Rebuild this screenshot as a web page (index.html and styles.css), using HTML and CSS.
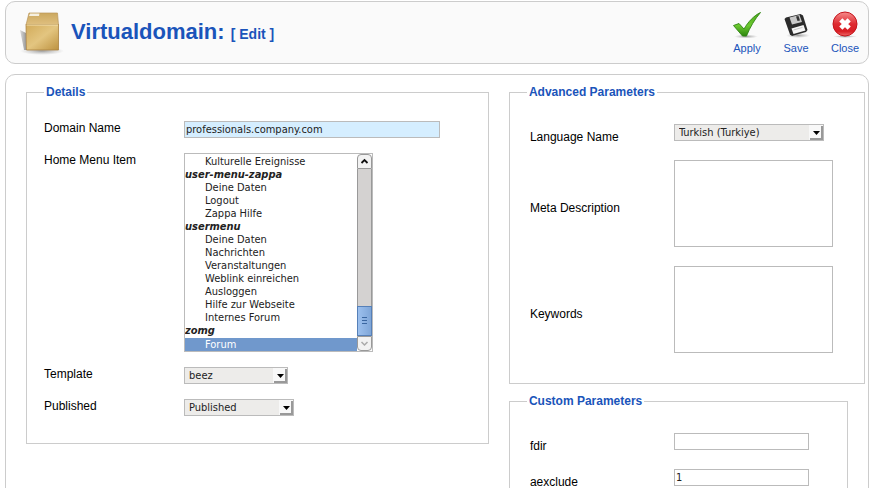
FILE: index.html
```html
<!DOCTYPE html>
<html lang="en">
<head>
<meta charset="utf-8">
<title>Virtualdomain: [ Edit ]</title>
<link rel="stylesheet" href="styles.css">
</head>
<body>
<header class="toolbar">
  <svg class="package" viewBox="0 0 48 48" aria-hidden="true">
    <defs>
      <linearGradient id="front" x1="0" y1="0" x2="1" y2="1"><stop offset="0" stop-color="#d2ab5a"/><stop offset=".5" stop-color="#e3c580"/><stop offset="1" stop-color="#bd9240"/></linearGradient>
      <linearGradient id="lid" x1="0" y1="0" x2="0" y2="1"><stop offset="0" stop-color="#cba85f"/><stop offset="1" stop-color="#e0c080"/></linearGradient>
      <linearGradient id="cast" x1="0" y1="0" x2="1" y2="0"><stop offset="0" stop-color="#ddd"/><stop offset="1" stop-color="#999"/></linearGradient>
      <radialGradient id="shade"><stop offset="0" stop-color="#777" stop-opacity=".7"/><stop offset="1" stop-color="#999" stop-opacity="0"/></radialGradient>
    </defs>
    <ellipse cx="24" cy="42" rx="22" ry="4" fill="url(#shade)"/>
    <path d="M2 21l6 3v17H6z" fill="url(#cast)"/>
    <path d="M11 4h28.500l1 12H8z" fill="url(#lid)" stroke="#b9955a" stroke-width=".7"/>
    <path d="M8 15.500h32.500v25.500H8.500z" fill="url(#front)" stroke="#a9823f" stroke-width=".8"/>
    <path d="M8.500 16h31.500" stroke="#f3e0b0"/>
    <path d="M12 4.500h9.500l-.5 2.500H11z" fill="#f5efe0"/>
  </svg>
  <h1>Virtualdomain: <small>[ Edit ]</small></h1>
  <nav class="actions">
    <a href="#apply">
      <svg viewBox="0 0 32 28" aria-hidden="true">
        <defs><linearGradient id="leaf" x1="0" y1="0" x2="0" y2="1"><stop offset="0" stop-color="#4fa81e"/><stop offset=".55" stop-color="#6cc92f"/><stop offset="1" stop-color="#2d850e"/></linearGradient></defs>
        <ellipse cx="15" cy="26.500" rx="12" ry="2" fill="url(#shade)"/>
        <path d="M2.500 15.500l5.500-2 5 5.500C17 12 23 5.500 29.500 2.500 24 9 19 17 15.500 26h-4z" fill="url(#leaf)" stroke="#2f8512" stroke-width=".9"/>
      </svg>
      Apply
    </a>
    <a href="#save">
      <svg viewBox="0 0 32 28" aria-hidden="true">
        <ellipse cx="18" cy="25.500" rx="12" ry="2.500" fill="url(#shade)"/>
        <path d="M4.500 9L6 7.500 20.500 4l2.500 1.500L27.500 20l-1.500 2-14 4-2-1.500z" fill="#2b2b2b"/>
        <path d="M9.500 7.500l10-2.500 2.500 7-10 2.500z" fill="#c8c8c8"/>
        <path d="M16 6.500l2.500-.6 1.500 4.500-2.500.6z" fill="#333"/>
        <path d="M11.500 18.500l12-3.500 2 5.500-12 3.500z" fill="#f6f6f6"/>
        <path d="M13.500 20l9-2.600" stroke="#bbb" stroke-width=".8"/>
      </svg>
      Save
    </a>
    <a href="#close">
      <svg viewBox="0 0 32 28" aria-hidden="true">
        <defs><linearGradient id="red" x1="0" y1="0" x2="0" y2="1"><stop offset="0" stop-color="#f68c8c"/><stop offset=".5" stop-color="#de2a30"/><stop offset=".8" stop-color="#d81e24"/><stop offset="1" stop-color="#f06a6a"/></linearGradient></defs>
        <ellipse cx="16" cy="26.500" rx="12" ry="1.500" fill="url(#shade)"/>
        <circle cx="16" cy="14" r="12" fill="url(#red)" stroke="#c4151c"/>
        <path d="M11.800 9.800l8.400 8.400m0-8.400l-8.400 8.400" stroke="#fff" stroke-width="4.500"/>
      </svg>
      Close
    </a>
  </nav>
</header>

<main class="panel">
  <fieldset class="details">
    <legend>Details</legend>
    <div class="row">
      <label for="domain">Domain Name</label>
      <input id="domain" class="domain" type="text" value="professionals.company.com">
    </div>
    <div class="row">
      <label for="menu">Home Menu Item</label>
      <div class="listbox">
        <select id="menu" size="15">
          <option>Kulturelle Ereignisse</option>
          <optgroup label="user-menu-zappa">
            <option>Deine Daten</option>
            <option>Logout</option>
            <option>Zappa Hilfe</option>
          </optgroup>
          <optgroup label="usermenu">
            <option>Deine Daten</option>
            <option>Nachrichten</option>
            <option>Veranstaltungen</option>
            <option>Weblink einreichen</option>
            <option>Ausloggen</option>
            <option>Hilfe zur Webseite</option>
            <option>Internes Forum</option>
          </optgroup>
          <optgroup label="zomg">
            <option selected>Forum</option>
          </optgroup>
        </select>
        <div class="scrollbar" aria-hidden="true">
          <svg class="step up" viewBox="0 0 13 13"><path d="M3.500 8l3-3 3 3" fill="none" stroke="#111" stroke-width="1.800"/></svg>
          <div class="track"></div>
          <svg class="thumb" viewBox="0 0 13 28"><path d="M4 10.500h5M4 13.500h5M4 16.500h5" stroke="#3a66a0"/></svg>
          <svg class="step down" viewBox="0 0 13 13"><path d="M3.500 5l3 3 3-3" fill="none" stroke="#aaa" stroke-width="1.500"/></svg>
        </div>
      </div>
    </div>
    <div class="row">
      <label for="template">Template</label>
      <div class="combo template">
        <select id="template"><option>beez</option></select>
        <svg viewBox="0 0 14 15" aria-hidden="true"><path class="face" d="M0 0h14v15H0z"/><path class="edge" d="M1 14h12V1"/><path d="M4 6h7l-3.500 4z"/></svg>
      </div>
    </div>
    <div class="row">
      <label for="published">Published</label>
      <div class="combo published">
        <select id="published"><option>Published</option></select>
        <svg viewBox="0 0 14 15" aria-hidden="true"><path class="face" d="M0 0h14v15H0z"/><path class="edge" d="M1 14h12V1"/><path d="M4 6h7l-3.500 4z"/></svg>
      </div>
    </div>
  </fieldset>

  <div class="side">
    <fieldset class="params">
      <legend>Advanced Parameters</legend>
      <div class="row">
        <label for="language">Language Name</label>
        <div class="combo language">
          <select id="language"><option>Turkish (Turkiye)</option></select>
          <svg viewBox="0 0 14 15" aria-hidden="true"><path class="face" d="M0 0h14v15H0z"/><path class="edge" d="M1 14h12V1"/><path d="M4 6h7l-3.500 4z"/></svg>
        </div>
      </div>
      <div class="row">
        <label for="description">Meta Description</label>
        <textarea id="description"></textarea>
      </div>
      <div class="row">
        <label for="keywords">Keywords</label>
        <textarea id="keywords"></textarea>
      </div>
    </fieldset>
    <fieldset class="params custom">
      <legend>Custom Parameters</legend>
      <div class="row">
        <label for="fdir">fdir</label>
        <input id="fdir" type="text">
      </div>
      <div class="row">
        <label for="aexclude">aexclude</label>
        <input id="aexclude" type="text" value="1">
      </div>
    </fieldset>
  </div>
</main>
</body>
</html>
```
FILE: styles.css
```css
* { box-sizing: border-box; }

body {
  margin: 0 5px;
  padding-top: 1px;
  background: #fff;
  color: #000;
  font: 12px/14px "Liberation Sans", Arial, sans-serif;
}

.toolbar, .panel {
  border: 1px solid #ccc;
  border-radius: 10px;
}

.toolbar {
  display: flex;
  align-items: center;
  height: 63px;
  padding: 0 0 0 12px;
  background: #fafafa;
}

.package { width: 48px; height: 48px; }

h1 {
  margin: 0 auto 0 5px;
  color: #1a54ba;
  font-size: 22px;
  line-height: 28px;
}

h1 small { font-size: 14px; }

.actions { display: flex; gap: 3px; }

.actions a {
  display: flex;
  flex-direction: column;
  align-items: center;
  gap: 3px;
  width: 46px;
  color: #1a54ba;
  font-size: 11px;
  text-decoration: none;
}

.actions svg { width: 32px; height: 28px; }

.panel {
  display: grid;
  grid-template-columns: 13fr 10fr;
  align-items: start;
  gap: 20px;
  margin-top: 10px;
  padding: 10px 3px 10px 20px;
}

.side { display: grid; gap: 10px; }

fieldset {
  display: grid;
  min-width: 0;
  margin: 0;
  border: 1px solid #ccc;
}

legend {
  padding: 0 2px;
  color: #1a54ba;
  font-weight: bold;
}

.details { gap: 15px; padding: 22px 17px 27px; }
.params { gap: 19px; padding: 25px 17px 30px; }
.custom { margin-right: 17px; }

.row { display: grid; align-items: start; justify-items: start; }
.details .row { grid-template-columns: 140px 1fr; }
.params .row { grid-template-columns: 144px 1fr; align-items: center; padding-left: 3px; }
.params label { margin-block: 4px -4px; }

input, select, textarea {
  margin: 0;
  border: 1px solid #bbb;
  border-radius: 0;
  background: #fff;
  color: #222;
  font: 11px/13px "DejaVu Sans Condensed", "DejaVu Sans", sans-serif;
}

input { width: 135px; height: 17px; padding: 0 1px; }
.domain { width: 256px; background: #d5eeff; }
textarea { display: block; width: 159px; height: 87px; resize: none; }

.listbox {
  display: flex;
  width: 189px;
  height: 199px;
  border: 1px solid #bbb;
}

.listbox select {
  flex: 1;
  min-width: 0;
  height: 197px;
  padding: 1px 0 0;
  border: 0;
  overflow: hidden;
  outline: 0;
}

.listbox optgroup {
  margin-left: -2px;
  font-style: italic;
}

.listbox option {
  height: 13px;
  min-height: 0;
  padding: 0 0 0 20px;
  font-style: normal;
  font-weight: normal;
}

.listbox optgroup option { padding-left: 22px; }
.listbox optgroup option:first-of-type { margin-top: -1px; }
.listbox optgroup option::before { content: none; }

.listbox option:checked {
  background: #7098cc linear-gradient(#7098cc, #7098cc);
  color: #fff;
}

.scrollbar { display: flex; flex-direction: column; width: 15px; }
.step { width: 15px; height: 15px; border: 1px solid #999; background: #f2f2f2; }
.up { border-radius: 4px 4px 0 0; }
.down { border-radius: 0 0 4px 4px; }
.track { flex: 1; border: solid #999; border-width: 0 1px; background: #d4d2d1; }
.thumb {
  width: 15px;
  height: 30px;
  border: 1px solid #5680b8;
  background: linear-gradient(90deg, #9cc0ee, #7fa6d8);
}

.combo { display: grid; height: 17px; }
.combo > * { grid-area: 1 / 1; }
.combo select {
  width: 100%;
  height: 17px;
  padding: 0 4px;
  appearance: none;
  background: #edecea;
}
.combo svg {
  place-self: center end;
  width: 14px;
  height: 15px;
  margin-right: 1px;
  pointer-events: none;
}
.face { fill: #f8f8f8; }
.edge { fill: none; stroke: #999; stroke-width: 2px; }
.template { width: 104px; }
.published { width: 110px; }
.language { width: 150px; }
```
